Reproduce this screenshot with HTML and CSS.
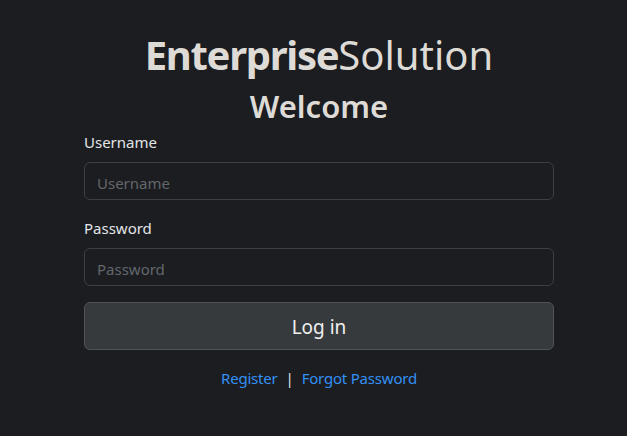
FILE: index.html
```html
<!DOCTYPE html>
<html lang="en">
<head>
<meta charset="utf-8">
<title>Log in</title>
<link rel="stylesheet" href="styles.css">
</head>
<body>
<main class="page">
  <div class="card">
    <h1 class="brand"><b>Enterprise</b>Solution</h1>
    <h2 class="welcome">Welcome</h2>
    <form class="form">
      <div class="field">
        <label class="label" for="u">Username</label>
        <input class="input" id="u" type="text" placeholder="Username">
      </div>
      <div class="field">
        <label class="label" for="p">Password</label>
        <input class="input" id="p" type="password" placeholder="Password">
      </div>
      <button class="btn" type="button">Log in</button>
    </form>
    <p class="links"><a href="#">Register</a><span class="sep">|</span><a href="#">Forgot Password</a></p>
  </div>
</main>
</body>
</html>
```
FILE: styles.css
```css
* { box-sizing: border-box; }
html, body { margin: 0; height: 100%; }
body {
  background: #1b1d20;
  color: #dee2e6;
  font-family: "Noto Sans", "Open Sans", sans-serif;
  font-size: 15px;
  line-height: 1.5;
}
.page {
  display: flex;
  justify-content: center;
  padding: 31px 0 0 11px;
}
.card {
  width: 470px;
  display: flex;
  flex-direction: column;
}
.brand {
  margin: 0;
  font-size: 40px;
  line-height: 48px;
  font-weight: 400;
  text-align: center;
  color: #dedbd7;
}
.brand b { font-weight: 700; letter-spacing: -1.3px; }
.welcome {
  margin: 8px 0 0;
  font-size: 31px;
  line-height: 38px;
  font-weight: 600;
  text-align: center;
  color: #dedbd7;
}
.form {
  display: flex;
  flex-direction: column;
  gap: 16px;
  margin-top: 5px;
}
.field { display: flex; flex-direction: column; gap: 8px; }
.label { font-size: 15px; line-height: 24px; color: #e3e5e8; }
.input {
  height: 38px;
  padding: 3px 12px 0;
  background: #1b1d20;
  border: 1px solid #3b4046;
  border-radius: 6px;
  color: #dee2e6;
  font: inherit;
  font-size: 15px;
}
.input::placeholder { color: #63676c; }
.btn {
  height: 48px;
  padding-top: 3px;
  background: #373a3d;
  border: 1px solid #50545a;
  border-radius: 6px;
  color: #f0f0f0;
  font: inherit;
  font-size: 19px;
}
.links {
  margin: 16px 0 0;
  text-align: center;
  line-height: 24px;
  letter-spacing: -0.2px;
}
.links a { color: #3390f5; text-decoration: none; }
.sep { color: #dee2e6; margin: 0 8px; }
```
